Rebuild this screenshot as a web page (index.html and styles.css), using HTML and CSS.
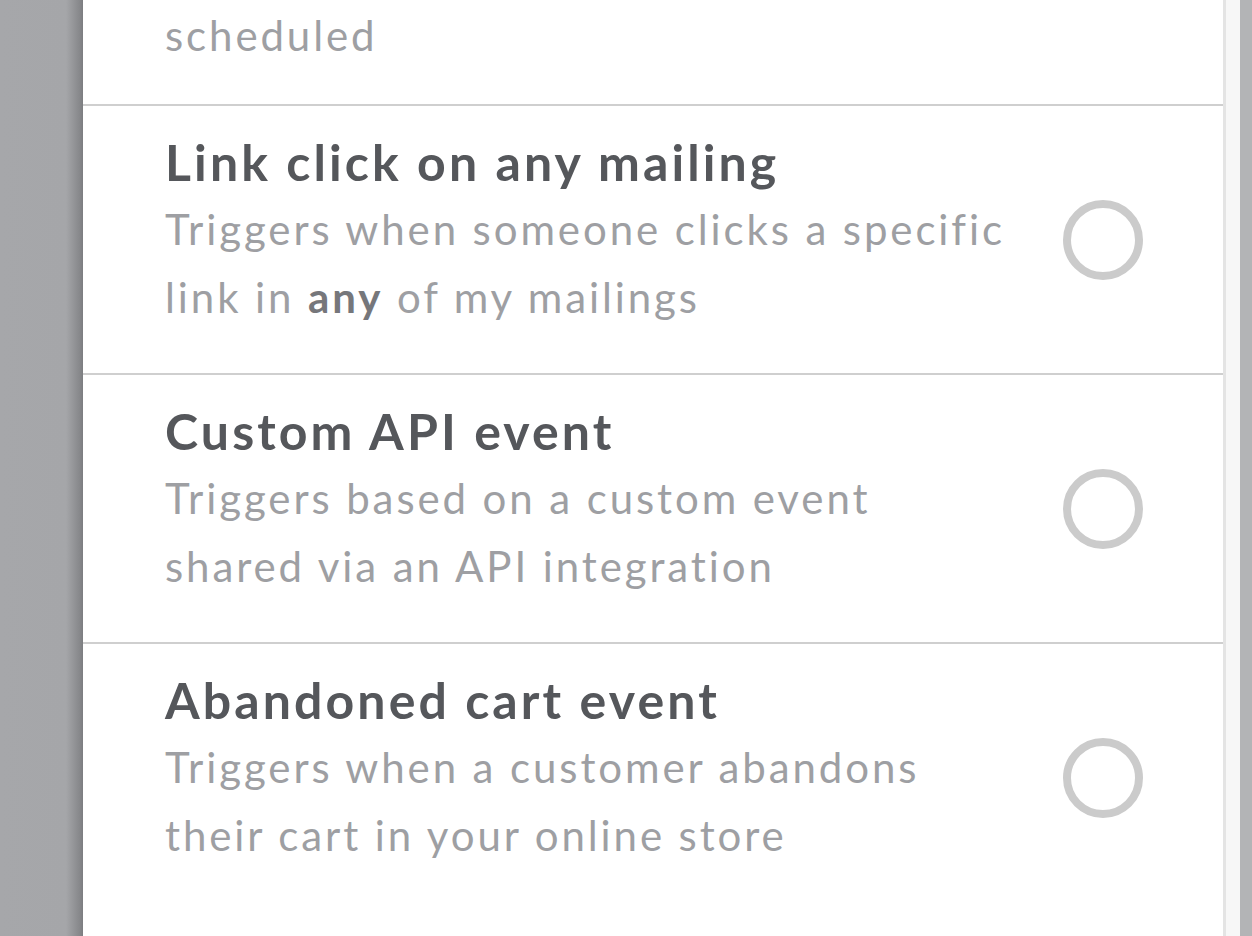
FILE: index.html
```html
<!DOCTYPE html>
<html>
<head>
	<meta charset="utf-8">
	<title>Choose a trigger</title>
	<link rel="stylesheet" href="styles.css">
</head>
<body>
	<div id="page">
		<div class="backdrop"></div>
		<div id="panel">
			<div class="row row-cut">
				<p class="desc">scheduled</p>
			</div>
			<div class="row">
				<div class="text">
					<h3 class="title">Link click on any mailing</h3>
					<p class="desc">Triggers when someone clicks a specific<br>link in <b>any</b> of my mailings</p>
				</div>
				<span class="radio"></span>
			</div>
			<div class="row">
				<div class="text">
					<h3 class="title">Custom API event</h3>
					<p class="desc">Triggers based on a custom event<br>shared via an API integration</p>
				</div>
				<span class="radio"></span>
			</div>
			<div class="row">
				<div class="text">
					<h3 class="title">Abandoned cart event</h3>
					<p class="desc">Triggers when a customer abandons<br>their cart in your online store</p>
				</div>
				<span class="radio"></span>
			</div>
		</div>
		<div class="track"></div>
		<div class="backdrop-right"></div>
	</div>
</body>
</html>
```

FILE: styles.css
```css
* { margin: 0; padding: 0; }
html, body { height: 100%; overflow: hidden; }
body { background: #a6a7aa; font-family: Lato, "Liberation Sans", sans-serif; }

#page { display: flex; height: 100%; }
.backdrop { width: 83px; flex: none; background: linear-gradient(to right, #a6a7aa 0, #a5a6a9 66px, #86878a 80px, #7c7d80 83px); }
#panel { width: 1140px; flex: none; background: #fff; border-right: 3px solid #e4e4e4; overflow: hidden; }
.track { width: 14px; flex: none; background: #f7f7f7; }
.backdrop-right { flex: 1; background: #b3b4b6; }

.row { display: flex; align-items: center; height: 267px; padding: 0 80px 0 82px; border-bottom: 2px solid #cfcfcf; box-sizing: content-box; }
.row:last-child { border-bottom: none; }
.row-cut { height: 106px; align-items: flex-start; box-sizing: border-box; }
.row-cut .desc { line-height: 68px; margin-top: 1px; }

.text { flex: 1; padding: 24px 0 42px; }
.title { font-size: 50px; line-height: 65px; font-weight: 700; color: #55575b; letter-spacing: 3.1px; }
.desc { font-size: 42px; line-height: 68px; color: #9e9fa3; letter-spacing: 2.9px; }
.desc b { font-weight: 700; color: #76777b; }

.radio { width: 64px; height: 64px; flex: none; border: 8px solid #cbcbcb; border-radius: 50%; }
```
